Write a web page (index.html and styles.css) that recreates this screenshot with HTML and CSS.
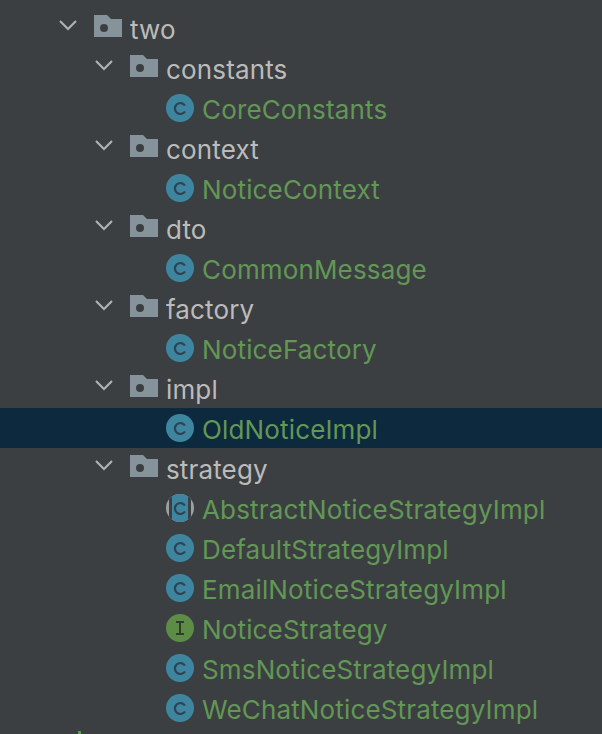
FILE: index.html
```html
<!DOCTYPE html>
<html lang="en">

<head>
    <meta charset="UTF-8">
    <title>Project tree</title>
    <link rel="stylesheet" href="styles.css">
</head>

<body>
    <svg class="defs" width="0" height="0">
        <clipPath id="abstract-clip">
            <circle cx="14" cy="14" r="14" />
        </clipPath>
        <symbol id="chevron" viewBox="0 0 20 12">
            <path d="M2 2l8 8 8-8" fill="none" stroke="#afb1b3" stroke-width="2.2" />
        </symbol>
        <symbol id="folder" viewBox="0 0 28 22">
            <path fill-rule="evenodd" d="M0 0h13l4 4h11v18H0zM10 9a4 4 0 1 0 0 8 4 4 0 0 0 0-8z" fill="#87939a" />
        </symbol>
        <symbol id="class" viewBox="0 0 28 28">
            <circle cx="14" cy="14" r="14" fill="#3e86a0" />
            <path d="M19 11.5A5.5 5.5 0 1 0 19 17.5" fill="none" stroke="#2f4354" stroke-width="2.2" />
        </symbol>
        <symbol id="abstract" viewBox="0 0 28 28">
            <g clip-path="url(#abstract-clip)">
                <rect width="28" height="28" fill="#9aa0a4" />
                <rect x="3" width="3" height="28" fill="#3c3f41" />
                <rect x="22" width="3" height="28" fill="#3c3f41" />
                <rect x="6" width="16" height="28" fill="#3e86a0" />
            </g>
            <path d="M19 11.5A5.5 5.5 0 1 0 19 17.5" fill="none" stroke="#2f4354" stroke-width="2.2" />
        </symbol>
        <symbol id="iface" viewBox="0 0 28 28">
            <circle cx="14" cy="14" r="14" fill="#5d8c46" />
            <path d="M10 8h8M10 20h8M14 8v12" fill="none" stroke="#2f3e2c" stroke-width="2" />
        </symbol>
    </svg>

    <ul class="tree">
        <li class="row depth-0"><svg class="chevron"><use href="#chevron" /></svg><svg class="folder"><use href="#folder" /></svg><span class="dir">two</span></li>

        <li class="row depth-1"><svg class="chevron"><use href="#chevron" /></svg><svg class="folder"><use href="#folder" /></svg><span class="dir">constants</span></li>
        <li class="row depth-2"><svg class="badge"><use href="#class" /></svg><span class="file">CoreConstants</span></li>

        <li class="row depth-1"><svg class="chevron"><use href="#chevron" /></svg><svg class="folder"><use href="#folder" /></svg><span class="dir">context</span></li>
        <li class="row depth-2"><svg class="badge"><use href="#class" /></svg><span class="file">NoticeContext</span></li>

        <li class="row depth-1"><svg class="chevron"><use href="#chevron" /></svg><svg class="folder"><use href="#folder" /></svg><span class="dir">dto</span></li>
        <li class="row depth-2"><svg class="badge"><use href="#class" /></svg><span class="file">CommonMessage</span></li>

        <li class="row depth-1"><svg class="chevron"><use href="#chevron" /></svg><svg class="folder"><use href="#folder" /></svg><span class="dir">factory</span></li>
        <li class="row depth-2"><svg class="badge"><use href="#class" /></svg><span class="file">NoticeFactory</span></li>

        <li class="row depth-1"><svg class="chevron"><use href="#chevron" /></svg><svg class="folder"><use href="#folder" /></svg><span class="dir">impl</span></li>
        <li class="row depth-2 selected"><svg class="badge"><use href="#class" /></svg><span class="file">OldNoticeImpl</span></li>

        <li class="row depth-1"><svg class="chevron"><use href="#chevron" /></svg><svg class="folder"><use href="#folder" /></svg><span class="dir">strategy</span></li>
        <li class="row depth-2"><svg class="badge"><use href="#abstract" /></svg><span class="file">AbstractNoticeStrategyImpl</span></li>
        <li class="row depth-2"><svg class="badge"><use href="#class" /></svg><span class="file">DefaultStrategyImpl</span></li>
        <li class="row depth-2"><svg class="badge"><use href="#class" /></svg><span class="file">EmailNoticeStrategyImpl</span></li>
        <li class="row depth-2"><svg class="badge"><use href="#iface" /></svg><span class="file">NoticeStrategy</span></li>
        <li class="row depth-2"><svg class="badge"><use href="#class" /></svg><span class="file">SmsNoticeStrategyImpl</span></li>
        <li class="row depth-2"><svg class="badge"><use href="#class" /></svg><span class="file">WeChatNoticeStrategyImpl</span></li>

        <!-- top edge of the next row, cut off by the window -->
        <li class="cut-row"><span class="cut-mark"></span></li>
    </ul>
</body>

</html>
```

FILE: styles.css
```css
/* Reset */
html,
body {
    margin: 0;
    padding: 0;
    height: 100%;
    overflow: hidden;
}

body {
    background-color: #3c3f41;
    font-family: 'Inter', sans-serif;
    font-size: 26px;
    letter-spacing: 0.15px;
}

.defs {
    display: block;
    height: 0;
}

.tree {
    list-style: none;
    margin: 0;
    padding: 8px 0 0;
}

.row {
    display: flex;
    align-items: center;
    height: 40px;
}

.selected {
    background-color: #0d293e;
}

/* Indents */
.depth-0 {
    padding-left: 58px;
}

.depth-1 {
    padding-left: 94px;
}

.depth-2 {
    padding-left: 166px;
}

/* Icons */
.chevron {
    width: 20px;
    height: 12px;
    margin-right: 16px;
    margin-top: -6px;
}

.folder {
    width: 28px;
    height: 22px;
    margin-right: 8px;
    margin-top: -4px;
}

.badge {
    width: 28px;
    height: 28px;
    margin-right: 8px;
}

/* Labels */
.dir,
.file {
    padding-top: 2px;
}

.dir {
    color: #bbbbbb;
}

.file {
    color: #629755;
}

/* Cut off row at the bottom */
.cut-row {
    display: flex;
    align-items: flex-end;
    height: 6px;
    padding-left: 78px;
}

.cut-mark {
    width: 3px;
    height: 3px;
    background-color: #5d9a4c;
}
```
